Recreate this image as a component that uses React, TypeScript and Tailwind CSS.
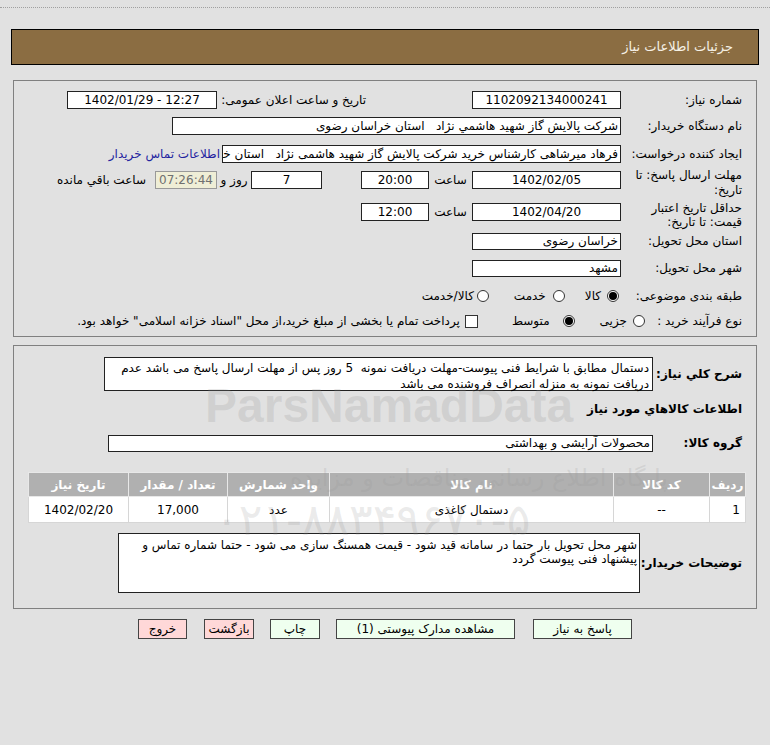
import type { ReactNode } from 'react';

const FONT = { fontFamily: '"DejaVu Sans", Tahoma, sans-serif' };

function Box({
  className = '',
  children,
  center = false,
}: {
  className?: string;
  children?: ReactNode;
  center?: boolean;
}) {
  return (
    <div
      className={`h-[18px] shrink-0 border border-[#222] bg-white flex items-center overflow-hidden whitespace-pre leading-none ${
        center ? 'justify-center' : 'justify-start pr-[2px]'
      } ${className}`}
    >
      {children}
    </div>
  );
}

function Radio({ checked = false }: { checked?: boolean }) {
  return (
    <span className="w-[12px] h-[12px] shrink-0 rounded-full border border-[#333] bg-white flex items-center justify-center">
      {checked && <span className="w-[8px] h-[8px] rounded-full bg-black" />}
    </span>
  );
}

function Btn({ w, red = false, children }: { w: string; red?: boolean; children: ReactNode }) {
  return (
    <button
      type="button"
      className={`${w} h-[20px] shrink-0 border border-[#444] text-[12px] leading-none flex items-center justify-center ${
        red ? 'bg-[#ffd8d8]' : 'bg-[#efffef]'
      }`}
    >
      {children}
    </button>
  );
}

const cols = [
  { title: 'ردیف', w: 'w-[36px]' },
  { title: 'کد کالا', w: 'w-[96px]' },
  { title: 'نام کالا', w: 'w-[284px]' },
  { title: 'واحد شمارش', w: 'w-[102px]' },
  { title: 'تعداد / مقدار', w: 'w-[99px]' },
  { title: 'تاریخ نیاز', w: 'w-[100px]' },
];

const row = ['1', '--', 'دستمال کاغذی', 'عدد', '17,000', '1402/02/20'];

export default function App() {
  return (
    <div
      dir="rtl"
      style={FONT}
      className="relative w-[770px] min-h-[745px] bg-[#e1e1e1] text-[12px] text-black overflow-hidden"
    >
      <div className="h-[7px]" />
      <div className="border-t border-dotted border-[#a0a0a0]" />

      {/* title bar */}
      <div className="mt-[21px] mx-[11px] h-[36px] border border-black bg-[#8b6d42] flex items-center pr-[25px]">
        <span className="text-[13px] text-[#f6f1e6]">جزئیات اطلاعات نیاز</span>
      </div>

      {/* panel 1 */}
      <div className="mt-[15px] mx-[13px] border border-[#808080] pt-[7px] pb-[4px] pr-[14px]">
        <div className="flex items-center h-[24px]">
          <div className="w-[121px] shrink-0">شماره نیاز:</div>
          <Box center className="w-[149px]">1102092134000241</Box>
          <div className="w-[106px] shrink-0" />
          <div className="w-[149px] shrink-0">تاريخ و ساعت اعلان عمومی:</div>
          <Box center className="w-[150px]">
            <span dir="ltr">1402/01/29 - 12:27</span>
          </Box>
        </div>

        <div className="flex items-center h-[28px]">
          <div className="w-[121px] shrink-0">نام دستگاه خریدار:</div>
          <Box className="w-[449px]">شرکت پالايش گاز شهيد هاشمي نژاد   استان خراسان رضوی</Box>
        </div>

        <div className="flex items-center h-[27px]">
          <div className="w-[121px] shrink-0">ایجاد کننده درخواست:</div>
          <Box className="w-[399px]">
            فرهاد میرشاهی کارشناس خرید شرکت پالایش گاز شهید هاشمی نژاد   استان خراسان رضوی
          </Box>
          <span className="mr-[2px] text-[#2424a0] whitespace-nowrap">اطلاعات تماس خریدار</span>
        </div>

        <div className="flex items-start h-[34px]">
          <div className="w-[121px] shrink-0 pt-[1px] leading-[15px]">
            مهلت ارسال پاسخ: تا
            <br />
            تاریخ:
          </div>
          <Box center className="w-[149px] mt-[4px]">1402/02/05</Box>
          <div className="w-[43px] shrink-0 mt-[4px] h-[18px] flex items-center justify-center">ساعت</div>
          <Box center className="w-[68px] mt-[4px]">20:00</Box>
          <div className="w-[39px] shrink-0" />
          <Box center className="w-[71px] mt-[4px]">7</Box>
          <div className="w-[34px] shrink-0 mt-[4px] h-[18px] flex items-center justify-center">روز و</div>
          <Box center className="w-[62px] mt-[4px] !bg-[#efeed6] text-[#707070] !border-[#999]">
            07:26:44
          </Box>
          <div className="mr-[9px] mt-[4px] h-[18px] flex items-center whitespace-nowrap">ساعت باقي مانده</div>
        </div>

        <div className="flex items-start h-[26px]">
          <div className="w-[121px] shrink-0 leading-[14px]">
            حداقل تاریخ اعتبار
            <br />
            قیمت: تا تاریخ:
          </div>
          <Box center className="w-[149px] mt-[2px]">1402/04/20</Box>
          <div className="w-[43px] shrink-0 mt-[2px] h-[18px] flex items-center justify-center">ساعت</div>
          <Box center className="w-[68px] mt-[2px]">12:00</Box>
        </div>

        <div className="flex items-center h-[28px]">
          <div className="w-[121px] shrink-0">استان محل تحویل:</div>
          <Box className="w-[149px] !h-[17px]">خراسان رضوی</Box>
        </div>

        <div className="flex items-center h-[26px]">
          <div className="w-[121px] shrink-0">شهر محل تحویل:</div>
          <Box className="w-[149px] !h-[17px]">مشهد</Box>
        </div>

        <div className="flex items-center h-[29px]">
          <div className="w-[123px] shrink-0">طبقه بندی موضوعی:</div>
          <Radio checked />
          <span className="mr-[6px]">کالا</span>
          <span className="mr-[20px]">
            <Radio />
          </span>
          <span className="mr-[7px]">خدمت</span>
          <span className="mr-[25px]">
            <Radio />
          </span>
          <span className="mr-[3px]">کالا/خدمت</span>
        </div>

        <div className="flex items-center h-[22px]">
          <div className="w-[97px] shrink-0">نوع فرآیند خرید :</div>
          <Radio />
          <span className="mr-[6px]">جزیی</span>
          <span className="mr-[25px]">
            <Radio checked />
          </span>
          <span className="mr-[13px]">متوسط</span>
          <span className="mr-[34px] w-[13px] h-[13px] shrink-0 border border-[#333] bg-white" />
          <span className="mr-[5px] whitespace-nowrap">
            پرداخت تمام یا بخشی از مبلغ خرید،از محل "اسناد خزانه اسلامی" خواهد بود.
          </span>
        </div>
      </div>

      {/* panel 2 */}
      <div className="mt-[8px] mx-[13px] border border-[#808080] pt-[11px] pb-[15px] pr-[14px]">
        <div className="flex items-center">
          <div className="w-[89px] shrink-0 font-bold whitespace-nowrap">شرح کلي نیاز:</div>
          <div className="w-[549px] h-[34px] border border-[#222] bg-white pr-[3px] pt-[2px] leading-[16px]">
            دستمال مطابق با شرایط فنی پیوست-مهلت دریافت نمونه &nbsp;5 روز پس از مهلت ارسال پاسخ می باشد عدم
            دریافت نمونه به منزله انصراف فروشنده می باشد
          </div>
        </div>

        <div className="mt-[9px] leading-[18px] font-bold">اطلاعات کالاهاي مورد نیاز</div>

        <div className="flex items-center h-[24px] mt-[13px]">
          <div className="w-[89px] shrink-0 font-bold whitespace-nowrap">گروه کالا:</div>
          <Box className="w-[545px] !h-[17px]">محصولات آرایشی و بهداشتی</Box>
        </div>

        <div className="mt-[17px] mr-[-4px] ml-[16px]">
          <table className="w-[717px] table-fixed border-collapse border border-[#c8c8c8]">
            <thead>
              <tr className="h-[24px] bg-[#b0b0b0]">
                {cols.map((c) => (
                  <th key={c.title} className={`${c.w} border border-[#e8e8e8] text-white font-bold text-[12px]`}>
                    {c.title}
                  </th>
                ))}
              </tr>
            </thead>
            <tbody>
              <tr className="h-[26px] bg-white">
                {row.map((v, i) => (
                  <td
                    key={i}
                    className={`border border-[#d6d6d6] text-[12px] ${i === 0 ? 'text-right pr-[5px]' : 'text-center'}`}
                  >
                    {v}
                  </td>
                ))}
              </tr>
            </tbody>
          </table>
        </div>

        <div className="flex items-center mt-[10px]">
          <div className="w-[102px] shrink-0 font-bold whitespace-nowrap">توضیحات خریدار:</div>
          <div className="w-[522px] h-[60px] border border-[#222] bg-white pr-[2px] pt-[4px] leading-[14px]">
            شهر محل تحویل بار حتما در سامانه قید شود - قیمت همسنگ سازی می شود - حتما شماره تماس و
            پیشنهاد فنی پیوست گردد
          </div>
        </div>
      </div>

      {/* buttons */}
      <div className="mt-[10px] flex items-center pr-[138px]">
        <Btn w="w-[99px]">پاسخ به نیاز</Btn>
        <div className="w-[18px]" />
        <Btn w="w-[179px]">مشاهده مدارک پیوستی (1)</Btn>
        <div className="w-[16px]" />
        <Btn w="w-[50px]">چاپ</Btn>
        <div className="w-[16px]" />
        <Btn w="w-[50px]" red>
          بازگشت
        </Btn>
        <div className="w-[17px]" />
        <Btn w="w-[49px]" red>
          خروج
        </Btn>
      </div>

      {/* watermark */}
      <div
        dir="ltr"
        className="pointer-events-none absolute left-[205px] top-[382px] text-[48px] font-bold leading-none text-[rgba(150,150,150,0.22)]"
        style={{ fontFamily: '"Liberation Sans", Arial, sans-serif' }}
      >
        ParsNamadData
      </div>
      <div className="pointer-events-none absolute left-[290px] top-[466px] text-[24px] leading-none text-[rgba(150,150,150,0.2)]">
        پایگاه اطلاع رسانی مناقصات و مزایده
      </div>
      <div
        dir="ltr"
        className="pointer-events-none absolute left-[215px] top-[498px] text-[44px] leading-none text-[rgba(150,150,150,0.2)]"
      >
        ۰۲۱-۸۸۳۴۹۶۷۰-۵
      </div>
    </div>
  );
}
